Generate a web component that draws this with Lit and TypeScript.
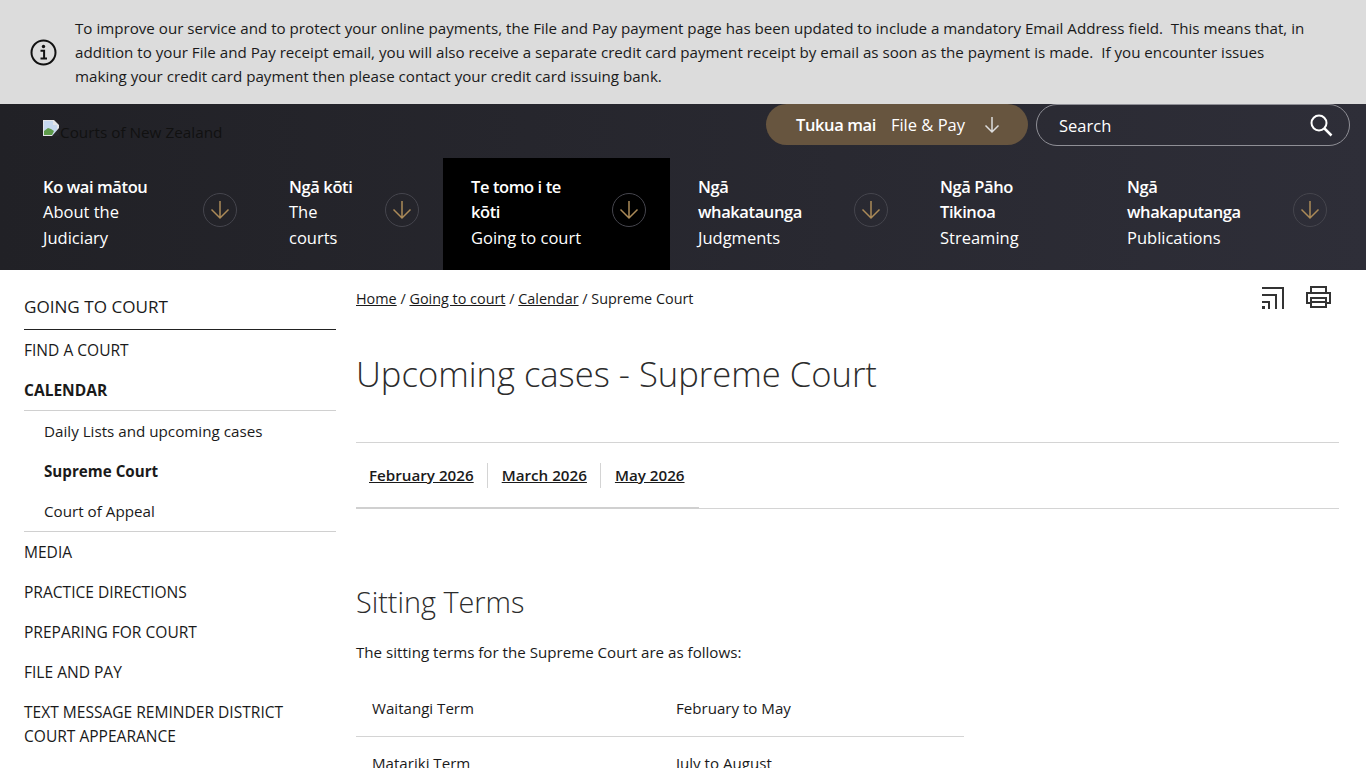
import { LitElement, html, css, svg } from "lit";
import { customElement } from "lit/decorators.js";

const navArrow = html`<svg width="22" height="22" viewBox="0 0 22 22" fill="none" stroke="currentColor" stroke-width="1.5"><path d="M11 2v17M2.5 10.5 11 19l8.5-8.5" /></svg>`;
const payArrow = html`<svg width="16" height="18" viewBox="0 0 16 18" fill="none" stroke="currentColor" stroke-width="1.5"><path d="M8 1v15M1.5 9.5 8 16l6.5-6.5" /></svg>`;

interface NavItem {
  lines: string[];
  sub: string[];
  width: number;
  active?: boolean;
  noArrow?: boolean;
}

const navItems: NavItem[] = [
  { lines: ["Ko wai mātou"], sub: ["About the", "Judiciary"], width: 246 },
  { lines: ["Ngā kōti"], sub: ["The", "courts"], width: 182 },
  { lines: ["Te tomo i te", "kōti"], sub: ["Going to court"], width: 227, active: true },
  { lines: ["Ngā", "whakataunga"], sub: ["Judgments"], width: 242 },
  { lines: ["Ngā Pāho", "Tikinoa"], sub: ["Streaming"], width: 187, noArrow: true },
  { lines: ["Ngā", "whakaputanga"], sub: ["Publications"], width: 252 },
];

@customElement("app-root")
export class AppRoot extends LitElement {
  static styles = css`
    :host {
      display: block;
      height: 768px;
      overflow: hidden;
      font-family: "Open Sans", "Noto Sans", sans-serif;
      font-size: 16px;
      color: #1a1a1a;
      background: #fff;
    }
    a { color: inherit; }

    .alert {
      height: 104px;
      box-sizing: border-box;
      background: #dcdcdc;
      display: flex;
      align-items: center;
      padding: 0 30px;
      gap: 18px;
    }
    .alert p {
      margin: 0;
      font-size: 15.15px;
      line-height: 24px;
      white-space: nowrap;
    }
    .alert svg { flex: none; }

    header {
      height: 166px;
      background: linear-gradient(90deg, #212126, #2e2e38);
      color: #fff;
      display: flex;
      flex-direction: column;
    }
    .top {
      height: 54px;
      display: flex;
      align-items: flex-start;
      padding: 0 16px 0 43px;
    }
    .logo {
      display: flex;
      align-items: flex-start;
      margin-top: 16px;
      color: #111;
      font-size: 15.3px;
      line-height: 24px;
      flex: 1;
    }
    .logo svg { flex: none; }
    .logo span { margin-left: 1px; }
    .pay {
      width: 262px;
      height: 41px;
      box-sizing: border-box;
      background: #67553f;
      border-radius: 21px;
      display: flex;
      align-items: center;
      padding-left: 30px;
      font-size: 16.5px;
    }
    .pay b { font-weight: 600; letter-spacing: -0.4px; margin-right: 15px; }
    .pay svg { margin-left: 19px; color: #ddd; }
    .search {
      width: 314px;
      height: 42px;
      box-sizing: border-box;
      margin-left: 8px;
      border: 1px solid #8f8f96;
      border-radius: 21px;
      display: flex;
      align-items: center;
      justify-content: space-between;
      padding: 0 16px 0 22px;
      font-size: 16.5px;
    }

    nav {
      display: flex;
      padding-left: 15px;
      height: 112px;
    }
    .item {
      box-sizing: border-box;
      display: flex;
      align-items: center;
      justify-content: space-between;
      padding: 0 24px 4px 28px;
      line-height: 25.5px;
      font-size: 16.5px;
    }
    .item.active { background: #000; }
    .item b, .item span.l { display: block; white-space: nowrap; }
    .item b { font-weight: 600; letter-spacing: -0.4px; }
    .circle {
      width: 34px;
      height: 34px;
      box-sizing: border-box;
      margin-top: -4px;
      border: 1px solid #45454d;
      border-radius: 50%;
      display: flex;
      align-items: center;
      justify-content: center;
      color: #ab8a58;
      flex: none;
    }

    .body {
      display: flex;
      padding-left: 24px;
      gap: 20px;
    }
    aside {
      width: 312px;
      flex: none;
      padding-top: 23px;
    }
    aside h2 {
      margin: 0;
      font-weight: 400;
      font-size: 17.1px;
      line-height: 28px;
      padding-bottom: 8px;
      border-bottom: 1px solid #222;
      color: #1a1a1a;
    }
    aside ul { list-style: none; margin: 0; padding: 0; }
    aside li {
      line-height: 24px;
      padding: 8px 0;
      font-size: 15.55px;
    }
    aside .strong { font-weight: 700; }
    aside .sub {
      border-top: 1px solid #d0d0d0;
      border-bottom: 1px solid #d0d0d0;
      padding: 0;
    }
    aside .sub ul li { padding-left: 20px; font-size: 15.2px; }

    main {
      width: 983px;
      flex: none;
    }
    .crumbs {
      display: flex;
      justify-content: space-between;
      align-items: flex-start;
      height: 79px;
      padding-top: 16px;
      box-sizing: border-box;
      font-size: 14.4px;
      line-height: 26px;
    }
    .tools { display: flex; gap: 19px; margin: -2px 7px 0 0; }
    h1 {
      margin: 0;
      font-weight: 300;
      font-size: 34.6px;
      line-height: 50px;
      color: #2c2c2c;
    }
    .tabs {
      margin-top: 43px;
      height: 67px;
      box-sizing: border-box;
      border-top: 1px solid #d4d4d4;
      border-bottom: 1px solid #d4d4d4;
      position: relative;
      display: flex;
      align-items: center;
      padding-left: 13px;
      font-weight: 600;
      font-size: 15.2px;
    }
    .tabs::after {
      content: "";
      position: absolute;
      left: 0;
      bottom: -1px;
      width: 343px;
      height: 2px;
      background: #d0d0d0;
    }
    .tabs a { padding-right: 13px; margin-right: 14px; border-right: 1px solid #d4d4d4; line-height: 25px; text-decoration: none; }
    .tabs a span { text-decoration: underline; }
    .tabs a:last-child { border: 0; }
    h2.terms {
      margin: 73px 0 0;
      font-weight: 300;
      font-size: 28.8px;
      line-height: 40px;
      color: #2c2c2c;
    }
    .intro {
      margin: 18px 0 0;
      font-size: 15.13px;
      line-height: 24px;
    }
    .table { width: 608px; margin-top: 18px; }
    .row {
      display: grid;
      grid-template-columns: 304px 304px;
      padding: 14px 16px 16px;
      box-sizing: border-box;
      border-bottom: 1px solid #d4d4d4;
      line-height: 24px;
      font-size: 15.1px;
    }
    .row:last-child { border: 0; }
  `;

  render() {
    return html`
      <div class="alert">
        <svg width="27" height="27" viewBox="0 0 27 27" fill="none" stroke="#111" stroke-width="2">
          <circle cx="13.5" cy="13.5" r="12" />
          <path d="M10.5 11.7h3.6v7.2M10.5 19.5h6.5" stroke-width="2" />
          <circle cx="13.5" cy="7.5" r="1.7" fill="#111" stroke="none" />
        </svg>
        <p>
          To improve our service and to protect your online payments, the File and Pay payment page has been updated to include a mandatory Email Address field.&nbsp; This means that, in<br />
          addition to your File and Pay receipt email, you will also receive a separate credit card payment receipt by email as soon as the payment is made.&nbsp; If you encounter issues<br />
          making your credit card payment then please contact your credit card issuing bank.
        </p>
      </div>
      <header>
        <div class="top">
          <div class="logo">
            <svg width="16" height="16" viewBox="0 0 16 16">
              <path d="M0 0h11l5 5v6l-5 5H0z" fill="#e3e5e8" />
              <path d="M1 1h9v4h4v5l-4 5H1z" fill="#c6d8ef" />
              <path d="M1 15v-4l4-3 3 1 3 2-2 4z" fill="#5d9a4a" />
              <path d="M9 16l7-8v8z" fill="#26262b" />
            </svg>
            <span>Courts of New Zealand</span>
          </div>
          <div class="pay"><b>Tukua mai</b>File &amp; Pay ${payArrow}</div>
          <div class="search">
            <span>Search</span>
            <svg width="24" height="24" viewBox="0 0 24 24" fill="none" stroke="#fff" stroke-width="2"><circle cx="10" cy="10" r="7.5" /><path d="m15.5 15.5 7 7" stroke-width="2.5" /></svg>
          </div>
        </div>
        <nav>
          ${navItems.map(
            (n) => html`
              <div class="item ${n.active ? "active" : ""}" style="width:${n.width}px">
                <div>
                  ${n.lines.map((l) => html`<b>${l}</b>`)}
                  ${n.sub.map((l) => html`<span class="l">${l}</span>`)}
                </div>
                ${n.noArrow ? "" : html`<div class="circle">${navArrow}</div>`}
              </div>
            `,
          )}
        </nav>
      </header>
      <div class="body">
        <aside>
          <h2>GOING TO COURT</h2>
          <ul>
            <li>FIND A COURT</li>
            <li class="strong">CALENDAR</li>
            <li class="sub">
              <ul>
                <li>Daily Lists and upcoming cases</li>
                <li class="strong">Supreme Court</li>
                <li>Court of Appeal</li>
              </ul>
            </li>
            <li>MEDIA</li>
            <li>PRACTICE DIRECTIONS</li>
            <li>PREPARING FOR COURT</li>
            <li>FILE AND PAY</li>
            <li>TEXT MESSAGE REMINDER DISTRICT<br />COURT APPEARANCE</li>
          </ul>
        </aside>
        <main>
          <div class="crumbs">
            <div><a href="#">Home</a> / <a href="#">Going to court</a> / <a href="#">Calendar</a> / Supreme Court</div>
            <div class="tools">
              <svg width="26" height="26" viewBox="0 0 26 26" fill="none" stroke="#333" stroke-width="2">
                ${svg`<path d="M2 4h21v21M2 11h14v14M2 18h7v7" /><rect x="2" y="22" width="3" height="3" fill="#333" stroke="none" />`}
              </svg>
              <svg width="27" height="26" viewBox="0 0 27 26" fill="none" stroke="#333" stroke-width="2">
                ${svg`<path d="M6 9V3h15v6M6 19H2V9h23v10h-4" /><rect x="6" y="14" width="15" height="9" /><path d="M7 18h13" />`}
              </svg>
            </div>
          </div>
          <h1>Upcoming cases - Supreme Court</h1>
          <div class="tabs">
            <a href="#"><span>February 2026</span></a>
            <a href="#"><span>March 2026</span></a>
            <a href="#"><span>May 2026</span></a>
          </div>
          <h2 class="terms">Sitting Terms</h2>
          <p class="intro">The sitting terms for the Supreme Court are as follows:</p>
          <div class="table">
            <div class="row"><span>Waitangi Term</span><span>February to May</span></div>
            <div class="row"><span>Matariki Term</span><span>July to August</span></div>
          </div>
        </main>
      </div>
    `;
  }
}
